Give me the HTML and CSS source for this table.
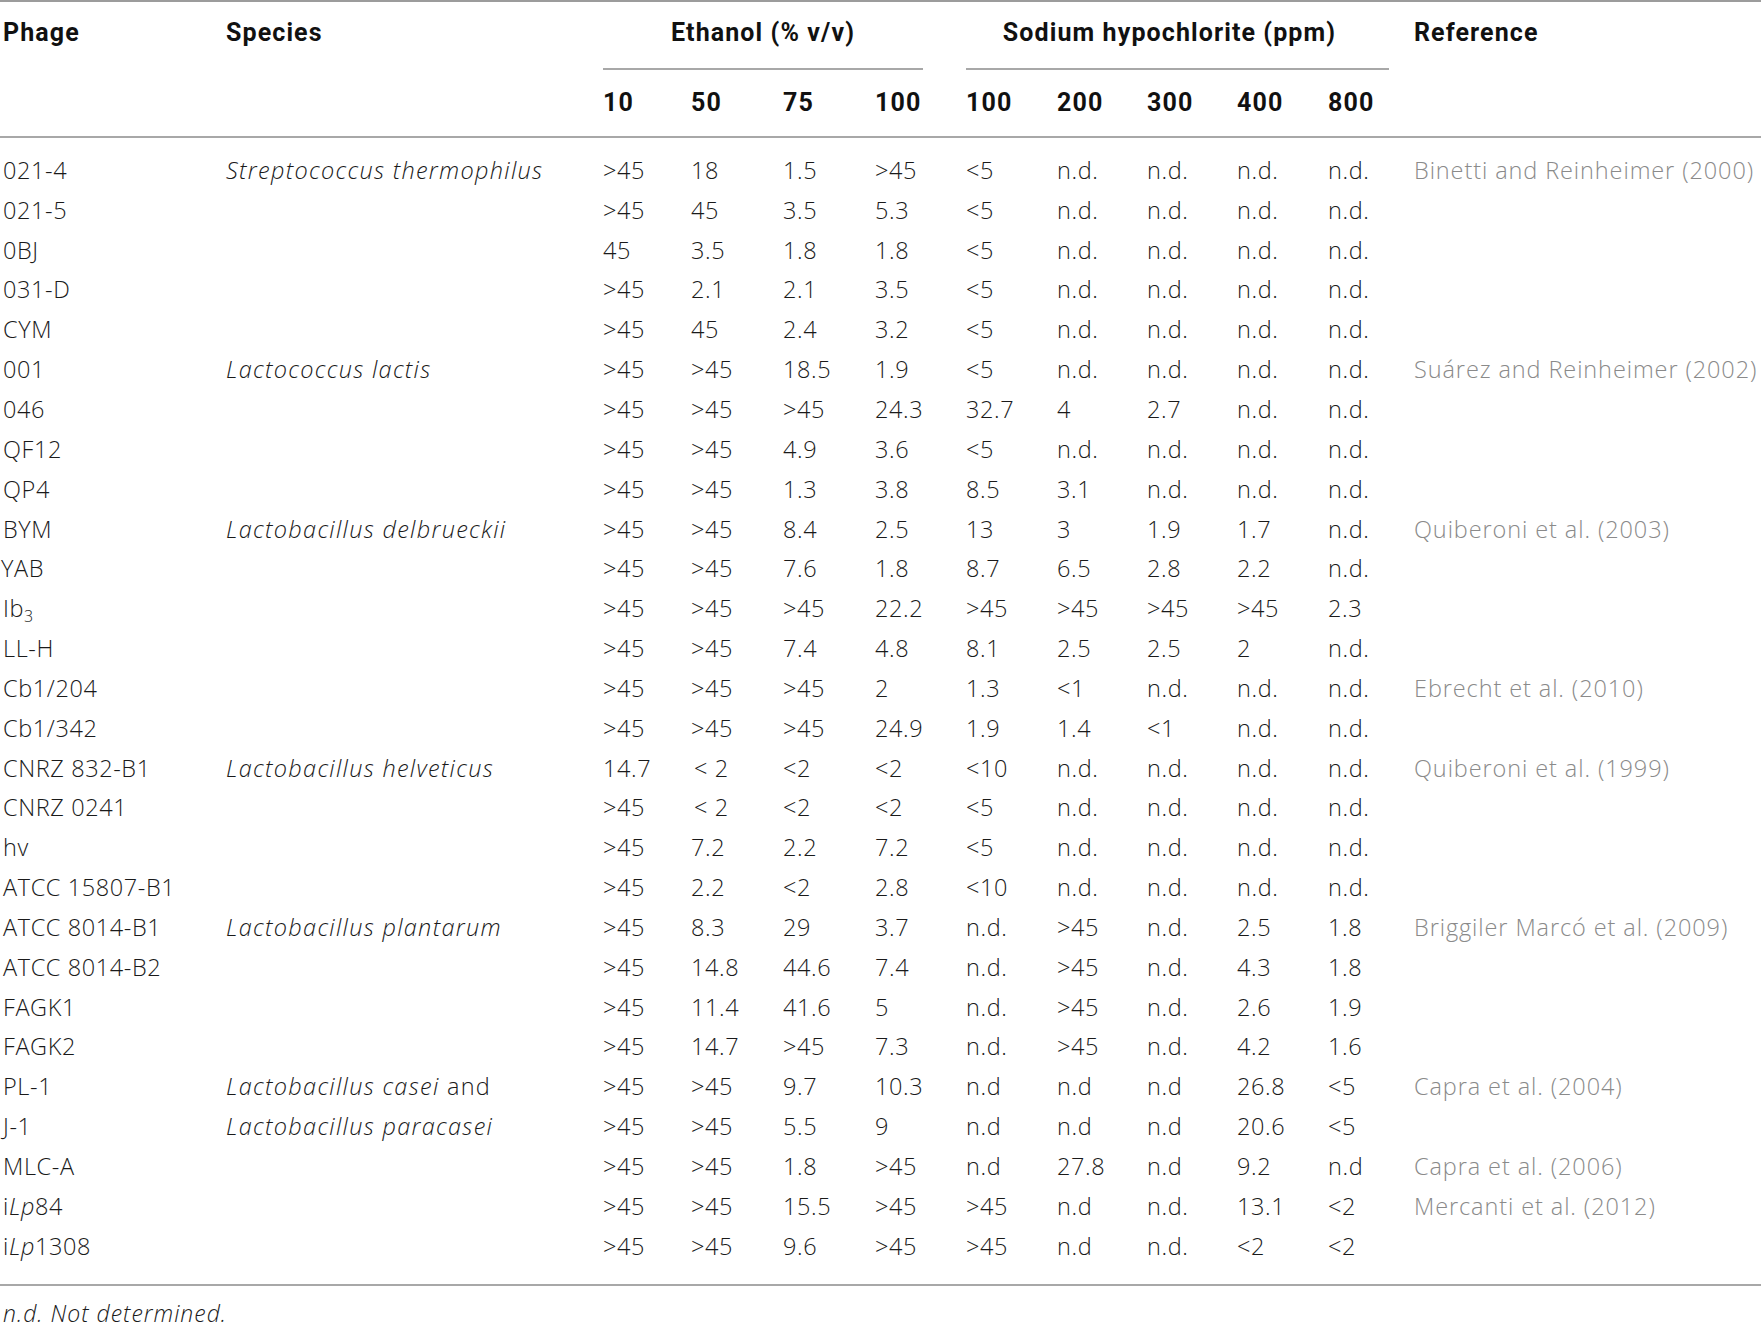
FILE: index.html
```html
<!DOCTYPE html>
<html lang="en">
<head>
<meta charset="utf-8">
<title>Phage inactivation table</title>
<link rel="stylesheet" href="styles.css">
</head>
<body>
<div class="table">
  <div class="rule rule-top"></div>
  <div class="head">
    <div class="hc c-phage">Phage</div>
    <div class="hc c-species">Species</div>
    <div class="group g-eth">Ethanol (% v/v)</div>
    <div class="group g-sod">Sodium hypochlorite (ppm)</div>
    <div class="hc c-ref">Reference</div>
    <div class="sub s1">10</div>
    <div class="sub s2">50</div>
    <div class="sub s3">75</div>
    <div class="sub s4">100</div>
    <div class="sub s5">100</div>
    <div class="sub s6">200</div>
    <div class="sub s7">300</div>
    <div class="sub s8">400</div>
    <div class="sub s9">800</div>
  </div>
  <div class="rule"></div>
  <div class="body">
    <div class="row"><span>021-4</span><span class="sp">Streptococcus thermophilus</span><span>&gt;45</span><span>18</span><span>1.5</span><span>&gt;45</span><span>&lt;5</span><span>n.d.</span><span>n.d.</span><span>n.d.</span><span>n.d.</span><span class="ref">Binetti and Reinheimer (2000)</span></div>
    <div class="row"><span>021-5</span><span></span><span>&gt;45</span><span>45</span><span>3.5</span><span>5.3</span><span>&lt;5</span><span>n.d.</span><span>n.d.</span><span>n.d.</span><span>n.d.</span><span></span></div>
    <div class="row"><span>0BJ</span><span></span><span>45</span><span>3.5</span><span>1.8</span><span>1.8</span><span>&lt;5</span><span>n.d.</span><span>n.d.</span><span>n.d.</span><span>n.d.</span><span></span></div>
    <div class="row"><span>031-D</span><span></span><span>&gt;45</span><span>2.1</span><span>2.1</span><span>3.5</span><span>&lt;5</span><span>n.d.</span><span>n.d.</span><span>n.d.</span><span>n.d.</span><span></span></div>
    <div class="row"><span>CYM</span><span></span><span>&gt;45</span><span>45</span><span>2.4</span><span>3.2</span><span>&lt;5</span><span>n.d.</span><span>n.d.</span><span>n.d.</span><span>n.d.</span><span></span></div>
    <div class="row"><span>001</span><span class="sp">Lactococcus lactis</span><span>&gt;45</span><span>&gt;45</span><span>18.5</span><span>1.9</span><span>&lt;5</span><span>n.d.</span><span>n.d.</span><span>n.d.</span><span>n.d.</span><span class="ref">Suárez and Reinheimer (2002)</span></div>
    <div class="row"><span>046</span><span></span><span>&gt;45</span><span>&gt;45</span><span>&gt;45</span><span>24.3</span><span>32.7</span><span>4</span><span>2.7</span><span>n.d.</span><span>n.d.</span><span></span></div>
    <div class="row"><span>QF12</span><span></span><span>&gt;45</span><span>&gt;45</span><span>4.9</span><span>3.6</span><span>&lt;5</span><span>n.d.</span><span>n.d.</span><span>n.d.</span><span>n.d.</span><span></span></div>
    <div class="row"><span>QP4</span><span></span><span>&gt;45</span><span>&gt;45</span><span>1.3</span><span>3.8</span><span>8.5</span><span>3.1</span><span>n.d.</span><span>n.d.</span><span>n.d.</span><span></span></div>
    <div class="row"><span>BYM</span><span class="sp">Lactobacillus delbrueckii</span><span>&gt;45</span><span>&gt;45</span><span>8.4</span><span>2.5</span><span>13</span><span>3</span><span>1.9</span><span>1.7</span><span>n.d.</span><span class="ref">Quiberoni et al. (2003)</span></div>
    <div class="row"><span class="nudge">YAB</span><span></span><span>&gt;45</span><span>&gt;45</span><span>7.6</span><span>1.8</span><span>8.7</span><span>6.5</span><span>2.8</span><span>2.2</span><span>n.d.</span><span></span></div>
    <div class="row"><span>Ib<sub>3</sub></span><span></span><span>&gt;45</span><span>&gt;45</span><span>&gt;45</span><span>22.2</span><span>&gt;45</span><span>&gt;45</span><span>&gt;45</span><span>&gt;45</span><span>2.3</span><span></span></div>
    <div class="row"><span>LL-H</span><span></span><span>&gt;45</span><span>&gt;45</span><span>7.4</span><span>4.8</span><span>8.1</span><span>2.5</span><span>2.5</span><span>2</span><span>n.d.</span><span></span></div>
    <div class="row"><span>Cb1/204</span><span></span><span>&gt;45</span><span>&gt;45</span><span>&gt;45</span><span>2</span><span>1.3</span><span>&lt;1</span><span>n.d.</span><span>n.d.</span><span>n.d.</span><span class="ref">Ebrecht et al. (2010)</span></div>
    <div class="row"><span>Cb1/342</span><span></span><span>&gt;45</span><span>&gt;45</span><span>&gt;45</span><span>24.9</span><span>1.9</span><span>1.4</span><span>&lt;1</span><span>n.d.</span><span>n.d.</span><span></span></div>
    <div class="row"><span>CNRZ 832-B1</span><span class="sp">Lactobacillus helveticus</span><span>14.7</span><span>&#8202;&lt; 2</span><span>&lt;2</span><span>&lt;2</span><span>&lt;10</span><span>n.d.</span><span>n.d.</span><span>n.d.</span><span>n.d.</span><span class="ref">Quiberoni et al. (1999)</span></div>
    <div class="row"><span>CNRZ 0241</span><span></span><span>&gt;45</span><span>&#8202;&lt; 2</span><span>&lt;2</span><span>&lt;2</span><span>&lt;5</span><span>n.d.</span><span>n.d.</span><span>n.d.</span><span>n.d.</span><span></span></div>
    <div class="row"><span>hv</span><span></span><span>&gt;45</span><span>7.2</span><span>2.2</span><span>7.2</span><span>&lt;5</span><span>n.d.</span><span>n.d.</span><span>n.d.</span><span>n.d.</span><span></span></div>
    <div class="row"><span>ATCC 15807-B1</span><span></span><span>&gt;45</span><span>2.2</span><span>&lt;2</span><span>2.8</span><span>&lt;10</span><span>n.d.</span><span>n.d.</span><span>n.d.</span><span>n.d.</span><span></span></div>
    <div class="row"><span>ATCC 8014-B1</span><span class="sp">Lactobacillus plantarum</span><span>&gt;45</span><span>8.3</span><span>29</span><span>3.7</span><span>n.d.</span><span>&gt;45</span><span>n.d.</span><span>2.5</span><span>1.8</span><span class="ref">Briggiler Marcó et al. (2009)</span></div>
    <div class="row"><span>ATCC 8014-B2</span><span></span><span>&gt;45</span><span>14.8</span><span>44.6</span><span>7.4</span><span>n.d.</span><span>&gt;45</span><span>n.d.</span><span>4.3</span><span>1.8</span><span></span></div>
    <div class="row"><span>FAGK1</span><span></span><span>&gt;45</span><span>11.4</span><span>41.6</span><span>5</span><span>n.d.</span><span>&gt;45</span><span>n.d.</span><span>2.6</span><span>1.9</span><span></span></div>
    <div class="row"><span>FAGK2</span><span></span><span>&gt;45</span><span>14.7</span><span>&gt;45</span><span>7.3</span><span>n.d.</span><span>&gt;45</span><span>n.d.</span><span>4.2</span><span>1.6</span><span></span></div>
    <div class="row"><span>PL-1</span><span class="sp"><em>Lactobacillus casei</em> and</span><span>&gt;45</span><span>&gt;45</span><span>9.7</span><span>10.3</span><span>n.d</span><span>n.d</span><span>n.d</span><span>26.8</span><span>&lt;5</span><span class="ref">Capra et al. (2004)</span></div>
    <div class="row"><span>J-1</span><span class="sp"><em>Lactobacillus paracasei</em></span><span>&gt;45</span><span>&gt;45</span><span>5.5</span><span>9</span><span>n.d</span><span>n.d</span><span>n.d</span><span>20.6</span><span>&lt;5</span><span></span></div>
    <div class="row"><span>MLC-A</span><span></span><span>&gt;45</span><span>&gt;45</span><span>1.8</span><span>&gt;45</span><span>n.d</span><span>27.8</span><span>n.d</span><span>9.2</span><span>n.d</span><span class="ref">Capra et al. (2006)</span></div>
    <div class="row"><span>i<em>Lp</em>84</span><span></span><span>&gt;45</span><span>&gt;45</span><span>15.5</span><span>&gt;45</span><span>&gt;45</span><span>n.d</span><span>n.d.</span><span>13.1</span><span>&lt;2</span><span class="ref">Mercanti et al. (2012)</span></div>
    <div class="row"><span>i<em>Lp</em>1308</span><span></span><span>&gt;45</span><span>&gt;45</span><span>9.6</span><span>&gt;45</span><span>&gt;45</span><span>n.d</span><span>n.d.</span><span>&lt;2</span><span>&lt;2</span><span></span></div>
  </div>
  <div class="rule"></div>
  <p class="note">n.d. Not determined.</p>
</div>
</body>
</html>
```

FILE: styles.css
```css
html, body {
  margin: 0;
  padding: 0;
  background: #ffffff;
}

body {
  font-family: "Open Sans", "Liberation Sans", sans-serif;
  color: #1a1a1a;
  font-size: 23.5px;
  font-weight: 300;
  letter-spacing: 0.6px;
}

.table {
  width: 1761px;
}

.rule {
  height: 2px;
  background: #a8a8a8;
}

.rule-top {
  background: #9c9c9c;
}

.head,
.row {
  display: grid;
  grid-template-columns: 223px 377px 88px 92px 92px 91px 91px 90px 90px 91px 86px 1fr;
}

.head {
  grid-template-rows: 68px 66px;
  font-family: "Roboto", "Liberation Sans", sans-serif;
  font-size: 25px;
  letter-spacing: 1.1px;
  font-weight: 700;
  color: #111;
}

.hc {
  grid-row: 1;
  padding: 19px 0 0 3px;
  line-height: 24px;
}

.c-phage { grid-column: 1; }
.c-species { grid-column: 2; }
.c-ref { grid-column: 12; }

.group {
  grid-row: 1;
  text-align: center;
  padding-top: 19px;
  line-height: 24px;
  border-bottom: 2px solid #a8a8a8;
  margin-left: 3px;
}

.g-eth {
  grid-column: 3 / span 4;
  margin-right: 40px;
}

.g-sod {
  grid-column: 7 / span 5;
  margin-right: 22px;
  padding-right: 16px;
}

.sub {
  grid-row: 2;
  padding: 21px 0 0 3px;
  line-height: 24px;
}

.s1 { grid-column: 3; }
.s2 { grid-column: 4; }
.s3 { grid-column: 5; }
.s4 { grid-column: 6; }
.s5 { grid-column: 7; }
.s6 { grid-column: 8; }
.s7 { grid-column: 9; }
.s8 { grid-column: 10; }
.s9 { grid-column: 11; }

.body {
  padding: 12px 0 18px;
}

.row {
  height: 39.85px;
  align-items: center;
  line-height: 24px;
}

.row > span {
  padding-left: 3px;
  white-space: nowrap;
}

.row > span.nudge {
  padding-left: 1px;
}

.row .sp {
  font-style: italic;
  letter-spacing: 1.3px;
}

.row .sp:has(em) {
  font-style: normal;
}

.row sub {
  font-size: 16px;
  line-height: 0;
  vertical-align: -5px;
}

.row em {
  font-style: italic;
}

.ref {
  color: #8a8a8a;
  letter-spacing: 0.9px;
}

.note {
  margin: 18px 0 0;
  padding-left: 3px;
  line-height: 18px;
  font-style: italic;
  font-size: 23px;
  letter-spacing: 1px;
}
```
